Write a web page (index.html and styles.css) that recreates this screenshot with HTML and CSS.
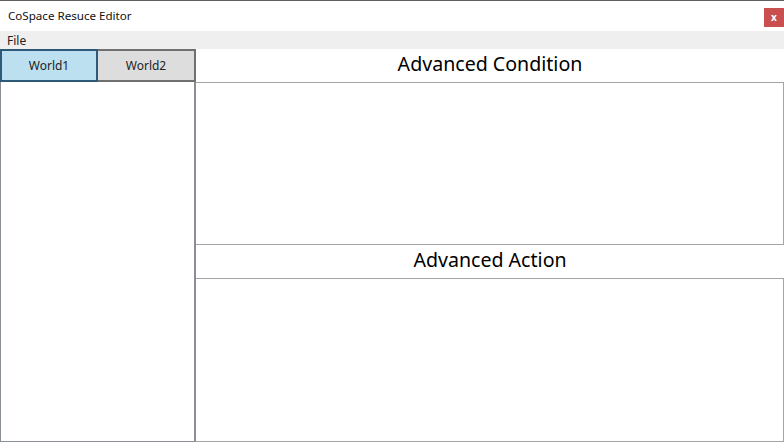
FILE: index.html
```html
<!DOCTYPE html>
<html>
<head>
<meta charset="utf-8">
<link rel="stylesheet" href="styles.css">
</head>
<body>
<div class="window">
  <div class="titlebar">
    <span class="title">CoSpace Resuce Editor</span>
    <div class="close">x</div>
  </div>
  <div class="menubar"><span class="menu-item">File</span></div>
  <div class="main">
    <div class="left">
      <div class="tabs">
        <div class="tab tab-active">World1</div>
        <div class="tab tab-inactive">World2</div>
      </div>
      <div class="list-box"></div>
    </div>
    <div class="right">
      <div class="section-title">Advanced Condition</div>
      <div class="section-box box-top"></div>
      <div class="section-title">Advanced Action</div>
      <div class="section-box box-bottom"></div>
    </div>
  </div>
</div>
</body>
</html>
```

FILE: styles.css
```css
html, body {
  margin: 0;
  padding: 0;
  background: #ffffff;
}
body {
  font-family: "Noto Sans", "Noto Sans CJK KR", "Liberation Sans", sans-serif;
  color: #000;
}
.window {
  width: 784px;
  height: 442px;
  display: flex;
  flex-direction: column;
  border-top: 1px solid #5f5f5f;
  box-sizing: border-box;
  overflow: hidden;
}
.titlebar {
  height: 30px;
  display: flex;
  align-items: center;
  justify-content: space-between;
  padding-left: 8px;
  background: #fff;
}
.title {
  font-size: 11.6px;
  color: #111;
  margin-top: -2px;
}
.close {
  width: 20px;
  height: 19px;
  background: #c9504f;
  color: #fff;
  font-size: 10px;
  font-weight: bold;
  display: flex;
  align-items: center;
  justify-content: center;
  margin-top: 2px;
  line-height: 1;
}
.menubar {
  height: 18px;
  background: #efefef;
  display: flex;
  align-items: center;
  padding-left: 7px;
}
.menu-item {
  font-size: 12px;
  color: #222;
}
.main {
  flex: 1;
  display: flex;
  min-height: 0;
}
.left {
  width: 196px;
  display: flex;
  flex-direction: column;
}
.tabs {
  height: 33px;
  display: flex;
}
.tab {
  width: 98px;
  box-sizing: border-box;
  display: flex;
  align-items: center;
  justify-content: center;
  font-size: 12px;
  color: #222;
}
.tab-active {
  background: #bde0f0;
  border: 2px solid #2f5978;
}
.tab-inactive {
  background: #dddddd;
  border: 2px solid #707070;
  border-left-width: 0;
}
.list-box {
  flex: 1;
  border: 1px solid #8a8f96;
  border-right: 2px solid #8a8f96;
  border-top: none;
  box-sizing: border-box;
}
.right {
  flex: 1;
  display: flex;
  flex-direction: column;
}
.section-title {
  height: 33px;
  display: flex;
  align-items: center;
  justify-content: center;
  font-size: 19.6px;
  color: #000;
  box-sizing: border-box;
  padding-bottom: 4px;
}
.section-box {
  border: 1px solid #a5a5a8;
  border-left: none;
  box-sizing: border-box;
}
.box-top {
  height: 163px;
}
.box-bottom {
  flex: 1;
}
```
